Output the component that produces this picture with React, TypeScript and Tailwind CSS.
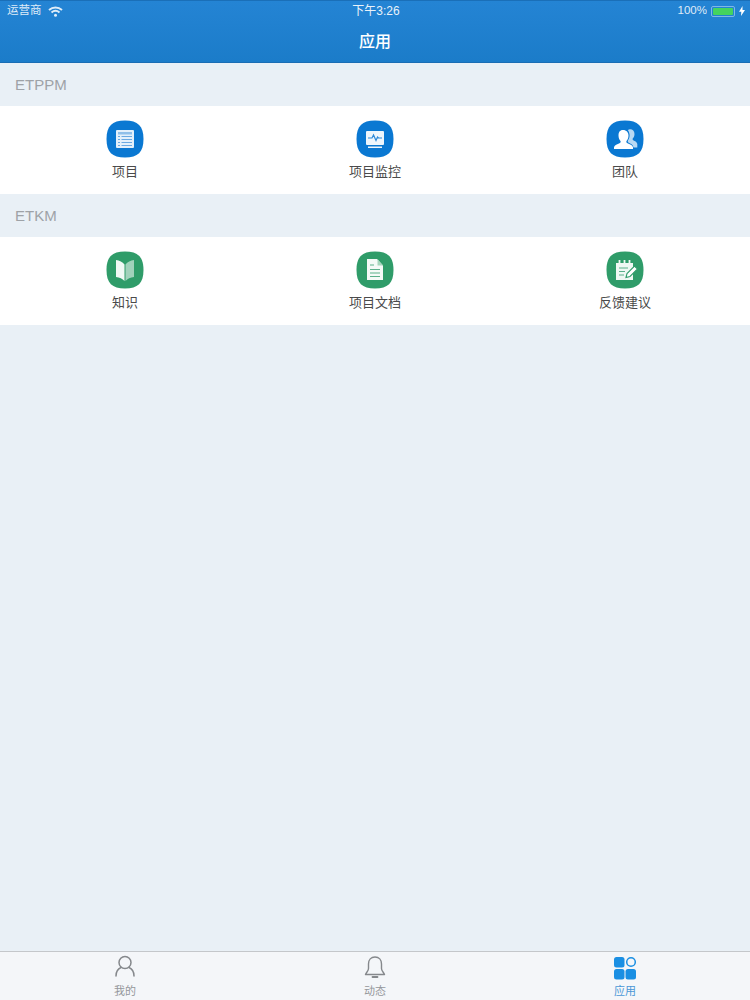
const font = "[font-family:'Liberation_Sans','Noto_Sans_CJK_SC',sans-serif]";

function Squircle({ color, children }: { color: string; children: React.ReactNode }) {
  return (
    <svg width="38" height="38" viewBox="0 0 38 38">
      <path d="M19 .5C32 .5 37.500 6 37.500 19S32 37.500 19 37.500 .5 32 .5 19 6 .5 19 .5Z" fill={color} />
      {children}
    </svg>
  );
}

const ProjectIcon = (
  <Squircle color="#0a78d2">
    <rect x="10" y="10" width="18" height="18" rx="1" fill="#e3f0fb" />
    <rect x="12" y="12" width="14" height="2.500" fill="#8fbfe9" />
    <path d="M12 16.500h2M15.500 16.500H26M12 19.500h2M15.500 19.500H26M12 22.500h2M15.500 22.500H26M12 25.500h2M15.500 25.500H26" stroke="#6aa9e2" strokeWidth="1.100" />
  </Squircle>
);

const MonitorIcon = (
  <Squircle color="#0a78d2">
    <rect x="10" y="11" width="18" height="14" rx="1" fill="#eef6fc" />
    <path d="M12 18h4l1.500-3 2.500 5.500 1.500-3.500 1 1h3.500" fill="none" stroke="#2f8ad8" strokeWidth="1.200" />
    <rect x="12" y="26.500" width="14" height="1.500" fill="#eef6fc" />
  </Squircle>
);

const TeamIcon = (
  <Squircle color="#0a78d2">
    <path d="M23 9.500c3-.8 5.500 1.500 5.500 4.500 0 2-.8 3.500-1.800 4.600-.4.900.2 1.600 1.300 2.100 1.800.8 3 1.500 3.300 3.300v3.500h-3.800c-.5-2.500-2.300-3.500-4.300-4.400-1.300-.6-1.800-1.500-1.200-2.800 1.500-2 2.800-6-.2-10.300Z" fill="#b9d9f3" />
    <path d="M17 10c3.400 0 5.500 2.400 5.500 5.600 0 2.400-1 4.200-2 5.400-.5 1.100.1 1.900 1.500 2.500 2.400 1 4.600 1.600 5 3.700V29H8v-1.800c.4-2.100 2.600-2.700 5-3.700 1.400-.6 2-1.400 1.500-2.500-1.100-1.200-2-3-2-5.400 0-3.200 1.100-5.600 4.500-5.600Z" fill="#fff" />
  </Squircle>
);

const BookIcon = (
  <Squircle color="#2f9c69">
    <path d="M10 9c3.500.5 6.500 2 8.500 4.500V30c-2-2.200-5-3.500-8.500-4Z" fill="#f1f9f5" />
    <path d="M28 9c-3.500.5-6.500 2-8.500 4.500V30c2-2.200 5-3.500 8.500-4Z" fill="#ffffff" opacity="0.55" />
  </Squircle>
);

const DocIcon = (
  <Squircle color="#2f9c69">
    <path d="M11 8h10l6 6.500V29H11Z" fill="#f4faf7" />
    <path d="M21.500 8v6.500H27Z" fill="#a6d5bd" />
    <path d="M14 14h4M14 18.500h10M14 22h10M14 25.500h10" stroke="#5bb08a" strokeWidth="1.200" />
  </Squircle>
);

const FeedbackIcon = (
  <Squircle color="#2f9c69">
    <path d="M10 12h17v17H10Z" fill="#eff8f3" />
    <path d="M13.500 9v5M18.500 9v5M23.500 9v5" stroke="#eff8f3" strokeWidth="1.800" />
    <path d="M13 17h9M13 20.500h6M13 24h5" stroke="#5bb08a" strokeWidth="1.200" />
    <path d="M20 26.500l1-4 7.500-7.500 3 3-7.500 7.500Z" fill="#ffffff" stroke="#2f9c69" strokeWidth="1.100" />
  </Squircle>
);

function AppItem({ icon, label }: { icon: React.ReactNode; label: string }) {
  return (
    <div className="flex flex-col items-center">
      {icon}
      <span className="mt-[4px] text-[13px] leading-[19px] text-[#4a4a4a]">{label}</span>
    </div>
  );
}

function Section({ title, items }: { title: string; items: { icon: React.ReactNode; label: string }[] }) {
  return (
    <div>
      <div className="flex h-[43px] items-center pl-[15px] pt-[2px] text-[15px] text-[#9ea2a7]">{title}</div>
      <div className="grid h-[88px] grid-cols-3 bg-white pt-[14px]">
        {items.map((it) => (
          <AppItem key={it.label} icon={it.icon} label={it.label} />
        ))}
      </div>
    </div>
  );
}

function Tab({ icon, label, active }: { icon: React.ReactNode; label: string; active?: boolean }) {
  return (
    <div className="flex flex-col items-center pt-[2px]">
      {icon}
      <span className={`mt-[4px] text-[11px] leading-[14px] ${active ? "text-[#4a97d6]" : "text-[#94979b]"}`}>{label}</span>
    </div>
  );
}

export default function App() {
  return (
    <div className={`flex h-[1000px] w-[750px] flex-col overflow-hidden bg-[#e9f0f6] ${font}`}>
      {/* Nav */}
      <div className="h-[63px] shrink-0 border-y border-t-[#1a6fb8] border-b-[#1a6db4] bg-gradient-to-b from-[#2484d4] to-[#1b7cc9] text-white">
        <div className="grid h-[20px] grid-cols-3 items-center pl-[7px] pr-[5px] text-[11.500px]">
          <div className="flex items-center gap-[6px] opacity-85">
            <span>运营商</span>
            <svg width="15" height="11" viewBox="0 0 15 11" fill="none" stroke="#fff" strokeWidth="2">
              <path d="M1 4c3.800-3.400 9.200-3.400 13 0M3.500 6.500c2.400-2 5.600-2 8 0" />
              <circle cx="7.500" cy="9.200" r="1.500" fill="#fff" stroke="none" />
            </svg>
          </div>
          <div className="text-center text-[12px] opacity-90">下午3:26</div>
          <div className="flex items-center justify-end gap-[4px]">
            <span className="opacity-85">100%</span>
            <div className="flex h-[11px] w-[24px] rounded-[2px] border border-[#7fb8e6] p-[1px]">
              <div className="h-full w-full rounded-[1px] bg-[#44d35f]" />
            </div>
            <svg width="6" height="10" viewBox="0 0 6 10" fill="#fff">
              <path d="M3.500 0 0 5.700h2.300L2 10l4-6H3.500Z" />
            </svg>
          </div>
        </div>
        <div className="flex h-[41px] items-center justify-center text-[16px] font-medium">应用</div>
      </div>

      <Section
        title="ETPPM"
        items={[
          { icon: ProjectIcon, label: "项目" },
          { icon: MonitorIcon, label: "项目监控" },
          { icon: TeamIcon, label: "团队" },
        ]}
      />
      <Section
        title="ETKM"
        items={[
          { icon: BookIcon, label: "知识" },
          { icon: DocIcon, label: "项目文档" },
          { icon: FeedbackIcon, label: "反馈建议" },
        ]}
      />

      <div className="flex-1" />

      {/* Tab bar */}
      <div className="grid h-[49px] shrink-0 grid-cols-3 border-t border-[#c4c7cb] bg-[#f4f6f9]">
        <Tab
          label="我的"
          icon={
            <svg width="24" height="26" viewBox="0 0 24 26" fill="none" stroke="#85888c" strokeWidth="1.500">
              <circle cx="12" cy="8.500" r="6" />
              <path d="M8 13.500c-3 1.300-5 4-5 8.500M16 13.500c3 1.300 5 4 5 8.500" strokeLinecap="round" />
            </svg>
          }
        />
        <Tab
          label="动态"
          icon={
            <svg width="24" height="26" viewBox="0 0 24 26" fill="none" stroke="#85888c" strokeWidth="1.400">
              <path d="M12 3c-4 0-6.500 3-6.500 7v4.500C5.500 17 3.500 18 2.500 20.500h19C20.500 18 18.500 17 18.500 14.500V10C18.500 6 16 3 12 3Z" strokeLinejoin="round" />
              <path d="M9.500 23h5" strokeWidth="1.800" strokeLinecap="round" />
            </svg>
          }
        />
        <Tab
          active
          label="应用"
          icon={
            <svg width="24" height="26" viewBox="0 0 24 26">
              <rect x="1" y="3" width="10.500" height="10.500" rx="2.500" fill="#1a8fe3" />
              <circle cx="18" cy="8" r="4.300" fill="none" stroke="#1a8fe3" strokeWidth="1.500" />
              <rect x="1" y="15" width="10.500" height="10.500" rx="2.500" fill="#1a8fe3" />
              <rect x="12.500" y="15" width="10.500" height="10.500" rx="2.500" fill="#1a8fe3" />
            </svg>
          }
        />
      </div>
    </div>
  );
}
